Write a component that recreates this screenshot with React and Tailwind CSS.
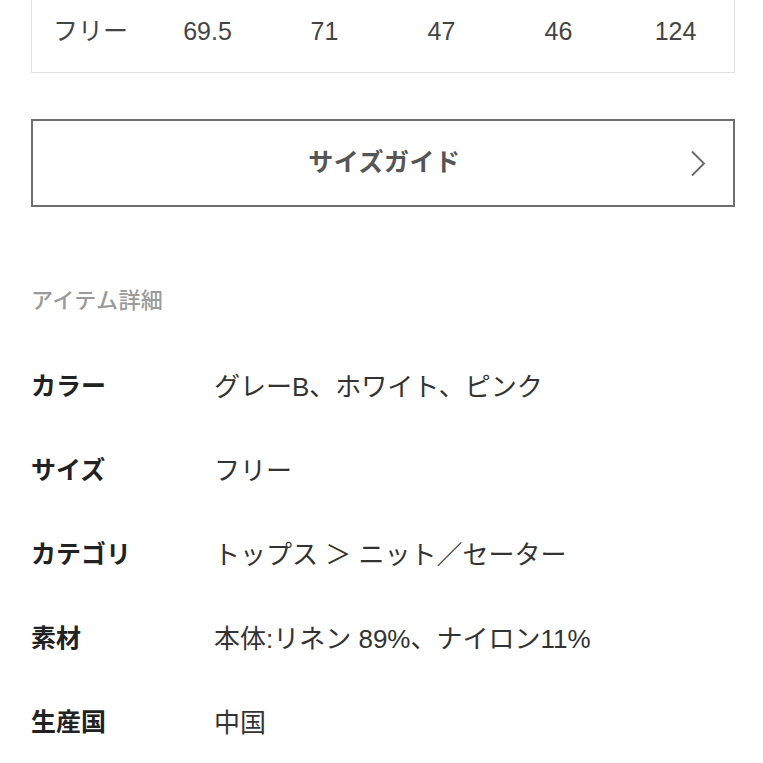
import React from 'react'

const sizeRow = ["フリー", "69.5", "71", "47", "46", "124"]

const details = [
  { label: "カラー", value: "グレーB、ホワイト、ピンク" },
  { label: "サイズ", value: "フリー" },
  { label: "カテゴリ", value: "トップス ＞ ニット／セーター" },
  { label: "素材", value: "本体:リネン 89%、ナイロン11%" },
  { label: "生産国", value: "中国" },
]

const font = { fontFamily: '"Liberation Sans", "Noto Sans CJK JP", sans-serif' }

const App = () => {
  return (
    <div className="w-[763px] h-[763px] overflow-hidden bg-white pl-[31px] pr-[28px] text-[#333]" style={font}>
      {/* Size table (bottom row) */}
      <div className="h-[73px] border-x border-b border-[#e2e2e2] pt-[12px]">
        <div className="grid grid-cols-6 text-[25px] leading-[38px] text-[#444]">
          {sizeRow.map((cell, i) => (
            <span key={i} className="text-center">{cell}</span>
          ))}
        </div>
      </div>

      {/* Size guide */}
      <button className="mt-[46px] w-full h-[88px] border-2 border-[#6e6e6e] grid grid-cols-[1fr_auto_1fr] items-center pl-[30px] pr-[27px] bg-white">
        <span />
        <span className="text-[25px] font-bold text-[#555] tracking-[0.5px]">サイズガイド</span>
        <svg className="justify-self-end" width="16" height="27" viewBox="0 0 16 27" fill="none">
          <path d="M2 1.5 L14 13.5 L2 25.5" stroke="#666" strokeWidth="1.8" />
        </svg>
      </button>

      {/* Item details */}
      <h2 className="mt-[79px] text-[22px] leading-[30px] font-medium text-[#9a9a9a] tracking-[0.4px]">アイテム詳細</h2>

      <div className="mt-[29px] flex flex-col">
        {details.map((d) => (
          <div key={d.label} className="grid grid-cols-[183px_1fr] h-[84px] items-center">
            <span className="text-[25px] font-bold text-[#222]">{d.label}</span>
            <span className="text-[26px] text-[#333]">{d.value}</span>
          </div>
        ))}
      </div>
    </div>
  )
}

export default App
